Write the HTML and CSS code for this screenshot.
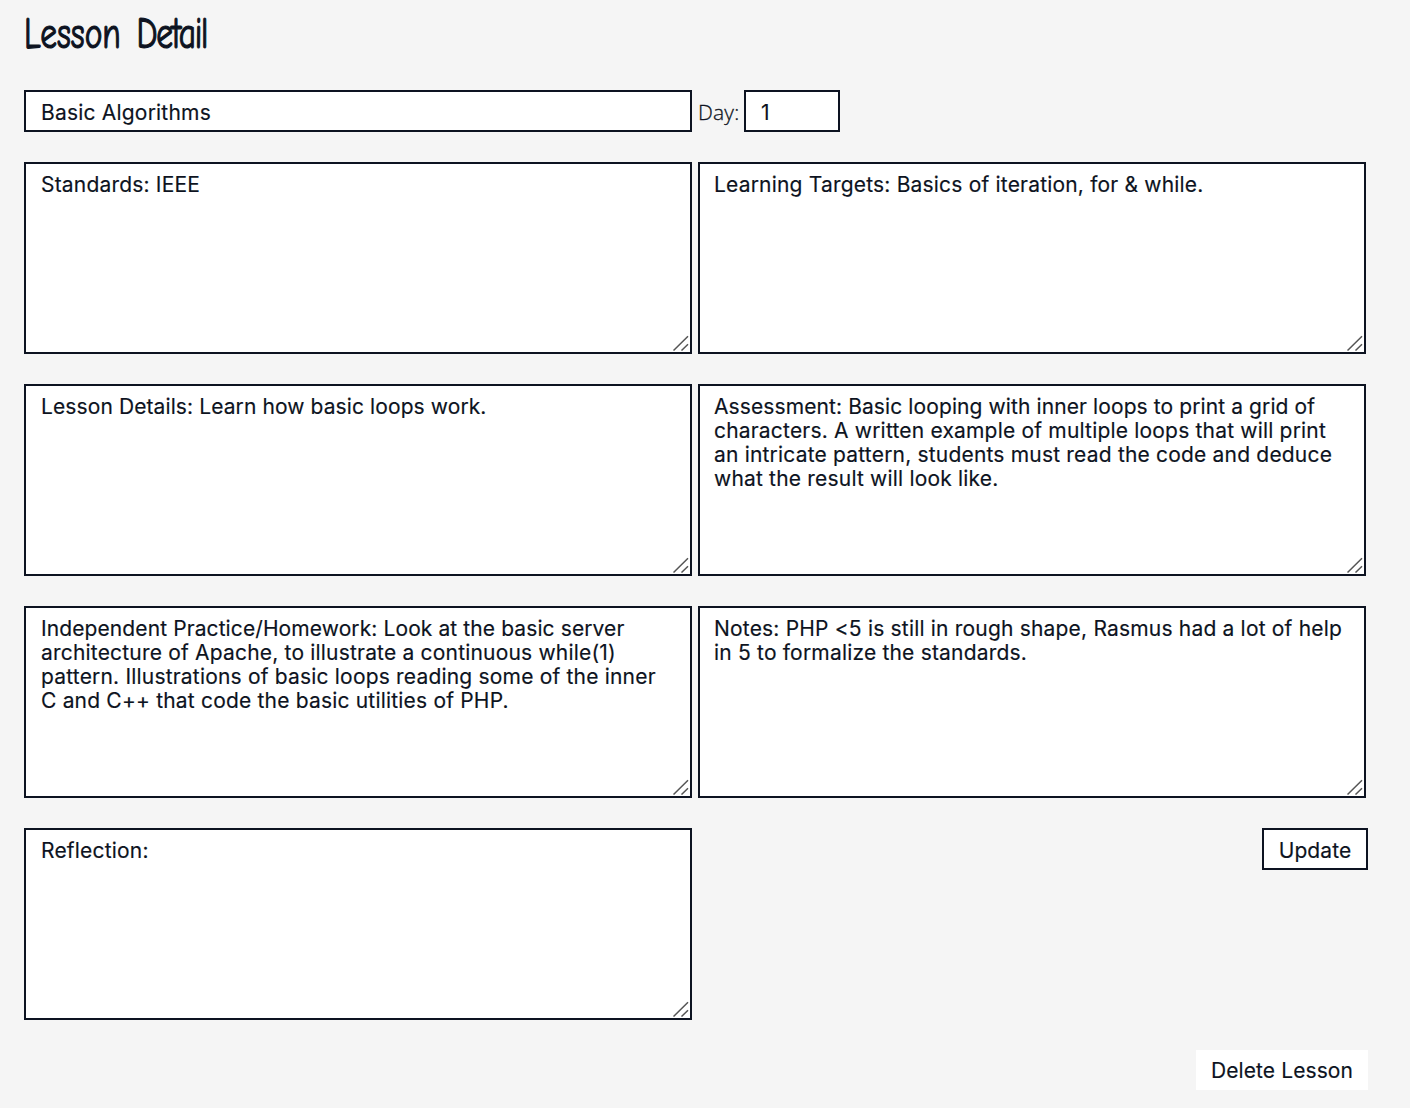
FILE: index.html
```html
<!DOCTYPE html>
<html lang="en">
<head>
<meta charset="utf-8">
<title>Lesson Detail</title>
<link rel="stylesheet" href="styles.css">
</head>
<body>
<main class="page">
<h1 class="title"><span class="title-text">Lesson <span class="title-end">Detail</span></span></h1>
<form class="lesson">
<div class="top"><div class="field name">Basic Algorithms</div><span class="label">Day:</span><div class="field day">1</div></div>
<div class="grid">
<div class="area"><p>Standards: IEEE</p><svg class="grip" viewBox="0 0 16 16"><path d="M.5 15.5 15 1.3M8.5 15.5 15 9.3"/></svg></div>
<div class="area"><p>Learning Targets: Basics of iteration, for &amp; while.</p><svg class="grip" viewBox="0 0 16 16"><path d="M.5 15.5 15 1.3M8.5 15.5 15 9.3"/></svg></div>
<div class="area"><p><span class="snug">Lesson Details: Learn how basic loops work.</span></p><svg class="grip" viewBox="0 0 16 16"><path d="M.5 15.5 15 1.3M8.5 15.5 15 9.3"/></svg></div>
<div class="area"><p><span class="snug">Assessment: Basic looping with inner loops to print a grid of</span><br>characters. A written example of multiple loops that will print<br>an intricate pattern, students must read the code and deduce<br>what the result will look like.</p><svg class="grip" viewBox="0 0 16 16"><path d="M.5 15.5 15 1.3M8.5 15.5 15 9.3"/></svg></div>
<div class="area"><p><span class="snug">Independent Practice/Homework: Look at the basic server</span><br>architecture of Apache, to illustrate a continuous while(1)<br>pattern. Illustrations of basic loops reading some of the inner<br>C and C++ that code the basic utilities of PHP.</p><svg class="grip" viewBox="0 0 16 16"><path d="M.5 15.5 15 1.3M8.5 15.5 15 9.3"/></svg></div>
<div class="area"><p>Notes: PHP &lt;5 is still in rough shape, Rasmus had a lot of help<br>in 5 to formalize the standards.</p><svg class="grip" viewBox="0 0 16 16"><path d="M.5 15.5 15 1.3M8.5 15.5 15 9.3"/></svg></div>
<div class="area"><p>Reflection:</p><svg class="grip" viewBox="0 0 16 16"><path d="M.5 15.5 15 1.3M8.5 15.5 15 9.3"/></svg></div>
<button type="button" class="update">Update</button>
</div>
<button type="button" class="delete">Delete Lesson</button>
</form>
</main>
</body>
</html>
```
FILE: styles.css
```css
* { box-sizing: border-box; }
body { margin: 0; background: #f5f5f5; color: #0d1321; font: 21px/24px Inter, sans-serif; }
.page { padding: 10px 44px 18px 24px; height: 1108px; }
.title { margin: 0; height: 80px; font: 400 44px/48px "Comic Neue", "Patrick Hand", "Open Sans", sans-serif; }
.title-text { display: inline-block; transform: scaleX(.76); transform-origin: left; white-space: nowrap; word-spacing: 6px; -webkit-text-stroke: 1.2px #0d1321; }
.title-end { letter-spacing: -1.8px; }
.lesson { width: 1342px; }
.top { display: flex; height: 42px; margin-bottom: 30px; }
.field { border: 2px solid #0d1321; background: #fff; padding: 9px 15px 7px; letter-spacing: .2px; }
.name { width: 668px; }
.day { width: 96px; }
.label { width: 52px; padding: 10px 0 0 6px; font-family: "Open Sans", sans-serif; font-weight: 300; letter-spacing: .2px; -webkit-text-stroke: .3px #0d1321; }
.grid { display: grid; grid-template-columns: 668px 668px; gap: 30px 6px; }
.area { display: flex; position: relative; height: 192px; padding: 9px 14px 7px 15px; border: 2px solid #0d1321; background: #fff; }
.area:nth-child(even) { padding-left: 14px; }
.area p { margin: 0; white-space: nowrap; letter-spacing: .19px; }
.area .snug { letter-spacing: .1px; }
.field, .area p, button { -webkit-text-stroke: .15px #0d1321; }
.grip { position: absolute; right: 1px; bottom: 1px; width: 16px; height: 16px; fill: none; stroke: #555; stroke-width: 1.5; }
button { font: inherit; letter-spacing: .1px; color: inherit; background: #fff; padding: 1px 0 0; }
.update { justify-self: end; width: 106px; height: 42px; margin-right: -2px; padding-top: 3px; border: 2px solid #0d1321; }
.delete { display: block; width: 172px; height: 40px; margin: 30px -2px 0 auto; border: 0; }
```
